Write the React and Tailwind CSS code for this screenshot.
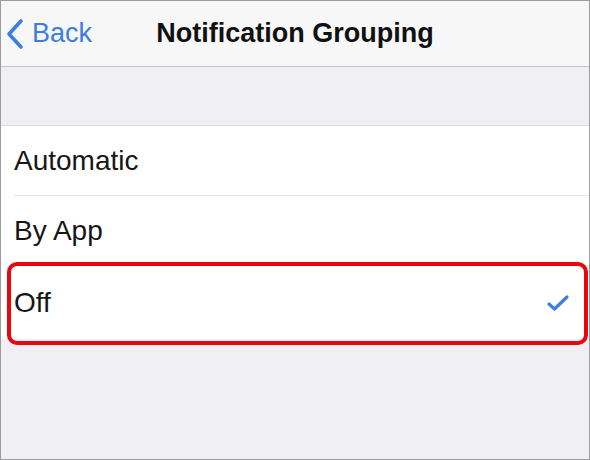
import React from "react";

const options = ["Automatic", "By App", "Off"];

export default function App() {
  const selected = "Off";
  return (
    <div
      className="w-[590px] h-[460px] overflow-hidden border border-[#9c9c9c] bg-[#efeff4] flex flex-col"
      style={{ fontFamily: '"Liberation Sans", Arial, sans-serif' }}
    >
      {/* Nav bar */}
      <div className="h-[66px] shrink-0 bg-[#f7f7f8] border-b border-[#c4c4c8] flex items-center relative">
        <div className="flex items-center pl-[4px] text-[#3b7de3]">
          <svg width="20" height="32" viewBox="0 0 20 32" fill="none">
            <path d="M16 3 L4 16 L16 29" stroke="currentColor" strokeWidth="3.6" strokeLinecap="round" strokeLinejoin="round" />
          </svg>
          <span className="ml-[7px] text-[27px] leading-none">Back</span>
        </div>
        <div className="absolute left-0 right-0 text-center text-[27px] font-bold text-[#111] pointer-events-none">
          Notification Grouping
        </div>
      </div>

      <div className="h-[58px] shrink-0" />

      {/* List */}
      <div className="bg-white border-t border-[#dcdce0]">
        {options.map((opt, i) => (
          <div key={opt} className="relative pl-[13px]">
            <div
              className={
                "flex items-center pr-[20px] text-[28px] text-[#161616] " +
                (i === 2 ? "h-[73px]" : "h-[70px]") +
                (i < options.length - 1 ? " border-b border-[#e6e6ea]" : "")
              }
            >
              <span className="flex-1">{opt}</span>
              {opt === selected && (
                <svg width="24" height="18" viewBox="0 0 24 18" fill="none" className="mr-[-1px]">
                  <path d="M3 10 L8.5 15 L21 3" stroke="#3b7de3" strokeWidth="3.2" strokeLinecap="round" strokeLinejoin="round" />
                </svg>
              )}
            </div>
            {opt === selected && (
              <div className="absolute left-[6px] right-[1px] top-[-4px] bottom-[-6px] border-[4px] border-[#e8070f] rounded-[10px]" />
            )}
          </div>
        ))}
      </div>
    </div>
  );
}
